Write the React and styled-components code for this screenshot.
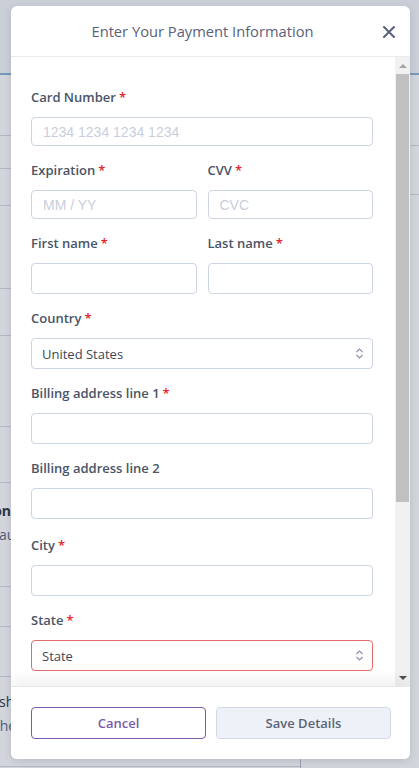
import styled, { createGlobalStyle } from "styled-components";

const GlobalStyle = createGlobalStyle`
  html, body {
    margin: 0;
    padding: 0;
    height: 100%;
  }
  body {
    font-family: "Open Sans", "Liberation Sans", sans-serif;
    background: #ffffff;
    overflow: hidden;
  }
  * {
    box-sizing: border-box;
  }
`;

// page that sits behind the dialog
const Page = styled.div`
  position: relative;
  width: 100%;
  height: 768px;
  background: #ffffff;
  overflow: hidden;
`;
const TopBar = styled.div`
  height: 75px;
  border-bottom: 2px solid #8fb3d9;
  background: #f7f8fa;
`;
const PageBody = styled.div`
  display: flex;
`;
const MainColumn = styled.div`
  width: 301px;
  border-right: 1px solid #b9bfca;
  min-height: 700px;
`;
const SideColumn = styled.div`
  flex: 1;
`;
const PageRow = styled.div`
  height: ${(p) => p.h}px;
  border-bottom: 1px solid #d8dce3;
  padding-top: ${(p) => p.pt || 0}px;
  font-size: 14px;
  line-height: 24px;
  color: #2f3646;
  white-space: nowrap;
`;
const RowTitle = styled.div`
  width: 11px;
  direction: rtl;
  font-weight: ${(p) => (p.bold ? 700 : 400)};
`;
const RowSub = styled.div`
  margin-left: ${(p) => p.shift || 0}px;
  color: ${(p) => p.color || "#5d6b84"};
`;
const Overlay = styled.div`
  position: absolute;
  inset: 0;
  background: rgba(30, 45, 80, 0.2);
`;

// dialog
const Modal = styled.div`
  position: absolute;
  top: 6px;
  left: 11px;
  width: 399px;
  height: 753px;
  background: #ffffff;
  border-radius: 6px;
  box-shadow: 0 2px 8px rgba(0, 0, 0, 0.12);
  display: flex;
  flex-direction: column;
  overflow: hidden;
`;
const Header = styled.div`
  position: relative;
  height: 51px;
  flex-shrink: 0;
  border-bottom: 1px solid #e7eaef;
  display: flex;
  align-items: center;
  justify-content: center;
  padding-right: 16px;
`;
const Title = styled.h2`
  margin: 0;
  font-size: 14.7px;
  font-weight: 400;
  color: #59627a;
`;
const CloseButton = styled.button`
  position: absolute;
  right: 15px;
  top: 19px;
  width: 13px;
  height: 13px;
  padding: 0;
  border: none;
  background: none;
  cursor: pointer;
  display: flex;
  align-items: center;
  justify-content: center;
`;
const BodyWrap = styled.div`
  flex: 1;
  min-height: 0;
  display: flex;
`;
const Body = styled.div`
  flex: 1;
  overflow: hidden;
  padding: 32px 22px 18px 20px;
`;

// drawn scrollbar (the page renders with hidden native scrollbars)
const Scrollbar = styled.div`
  width: 15px;
  flex-shrink: 0;
  background: #f1f1f1;
  display: flex;
  flex-direction: column;
`;
const ScrollArrow = styled.div`
  height: 17px;
  flex-shrink: 0;
  display: flex;
  align-items: center;
  justify-content: center;
  &::before {
    content: "";
    border-left: 4px solid transparent;
    border-right: 4px solid transparent;
    ${(p) =>
      p.$down
        ? "border-top: 4px solid #505050;"
        : "border-bottom: 4px solid #a3a3a3;"}
  }
`;
const ScrollThumb = styled.div`
  height: 428px;
  margin: 0 1px;
  background: #c1c1c1;
`;
const ScrollSpace = styled.div`
  flex: 1;
`;

const Row = styled.div`
  display: grid;
  grid-template-columns: 1fr 1fr;
  column-gap: 11px;
`;
const Field = styled.div`
  margin-bottom: ${(p) => p.$gap || 16}px;
`;
const Label = styled.label`
  display: block;
  font-size: 13px;
  font-weight: 600;
  line-height: 16px;
  color: #4a5468;
  margin-bottom: 12px;
  span {
    color: #e3242b;
    margin-left: 3px;
  }
`;
const Input = styled.input`
  display: block;
  width: 100%;
  height: ${(p) => (p.$stripe ? 29 : 31)}px;
  border: 1px solid #cdd4e2;
  border-radius: 4px;
  padding: 0 11px;
  font-family: ${(p) =>
    p.$stripe ? '"Liberation Sans", Arial, sans-serif' : '"Open Sans", sans-serif'};
  font-size: 14px;
  color: #3b4253;
  background: #ffffff;
  outline: none;
  &::placeholder {
    color: #c8cfdc;
  }
`;
const SelectWrap = styled.div`
  position: relative;
  svg {
    position: absolute;
    right: 9px;
    top: 9px;
    pointer-events: none;
  }
`;
const Select = styled.select`
  display: block;
  width: 100%;
  height: 31px;
  appearance: none;
  border: 1px solid ${(p) => (p.$error ? "#e36b6b" : "#cdd4e2")};
  border-radius: 4px;
  padding: 0 30px 0 10px;
  font-family: "Open Sans", sans-serif;
  font-size: 13px;
  color: #3f4657;
  background: #ffffff;
  outline: none;
`;
const Footer = styled.div`
  flex-shrink: 0;
  height: 73px;
  border-top: 1px solid #e4e7ec;
  box-shadow: 0 -8px 12px rgba(0, 0, 0, 0.05);
  display: grid;
  grid-template-columns: 1fr 1fr;
  column-gap: 10px;
  align-items: center;
  padding: 0 19px 0 20px;
  position: relative;
  background: #ffffff;
`;
const Button = styled.button`
  height: 32px;
  border-radius: 4px;
  font-family: "Open Sans", sans-serif;
  font-size: 13px;
  font-weight: 600;
  cursor: pointer;
  background: ${(p) => (p.$variant === "outline" ? "#ffffff" : "#eef1f7")};
  border: 1px solid ${(p) => (p.$variant === "outline" ? "#7a5aa8" : "#d3d9e6")};
  color: ${(p) => (p.$variant === "outline" ? "#7a5aa8" : "#5a6478")};
`;

const Chevrons = () => (
  <svg width="9" height="13" viewBox="0 0 9 13" fill="none">
    <path d="M1.5 5 L4.5 2 L7.5 5" stroke="#8b93a5" strokeWidth="1.2" />
    <path d="M1.5 8 L4.5 11 L7.5 8" stroke="#8b93a5" strokeWidth="1.2" />
  </svg>
);

const Req = () => <span>*</span>;

const TextField = ({ label, required, gap, ...rest }) => (
  <Field $gap={gap}>
    <Label>
      {label}
      {required && <Req />}
    </Label>
    <Input {...rest} />
  </Field>
);

const SelectField = ({ label, required, value, options, error }) => (
  <Field>
    <Label>
      {label}
      {required && <Req />}
    </Label>
    <SelectWrap>
      <Select defaultValue={value} $error={error}>
        {options.map((o) => (
          <option key={o}>{o}</option>
        ))}
      </Select>
      <Chevrons />
    </SelectWrap>
  </Field>
);

const App = () => {
  return (
    <>
      <GlobalStyle />
      <Page>
        <TopBar />
        <PageBody>
          <MainColumn>
            <PageRow h={61} />
            <PageRow h={33} />
            <PageRow h={37} />
            <PageRow h={83} />
            <PageRow h={47} />
            <PageRow h={91} />
            <PageRow h={56} />
            <PageRow h={104} pt={16}>
              <RowTitle bold>Subscription</RowTitle>
              <RowSub shift={-1}>automatic renewal</RowSub>
            </PageRow>
            <PageRow h={40} />
            <PageRow h={50} />
            <PageRow h={90} pt={13}>
              <RowSub color="#2f3646" shift={-1}>shipping</RowSub>
              <RowSub shift={-7}>checkout</RowSub>
            </PageRow>
          </MainColumn>
          <SideColumn>
            <PageRow h={71} />
            <PageRow h={49} />
          </SideColumn>
        </PageBody>
        <Overlay />
        <Modal>
          <Header>
            <Title>Enter Your Payment Information</Title>
            <CloseButton aria-label="Close">
              <svg width="12" height="12" viewBox="0 0 12 12">
                <path
                  d="M1 1 L11 11 M11 1 L1 11"
                  stroke="#59627a"
                  strokeWidth="2"
                  strokeLinecap="round"
                />
              </svg>
            </CloseButton>
          </Header>
          <BodyWrap>
            <Body>
              <TextField
                label="Card Number"
                required
                $stripe
                placeholder="1234 1234 1234 1234"
              />
              <Row>
                <TextField label="Expiration" required $stripe placeholder="MM / YY" />
                <TextField label="CVV" required $stripe placeholder="CVC" />
              </Row>
              <Row>
                <TextField label="First name" required />
                <TextField label="Last name" required />
              </Row>
              <SelectField
                label="Country"
                required
                value="United States"
                options={["United States", "Canada", "United Kingdom"]}
              />
              <TextField label="Billing address line 1" required />
              <TextField label="Billing address line 2" gap={18} />
              <TextField label="City" required />
              <SelectField
                label="State"
                required
                error
                value="State"
                options={["State", "California", "New York", "Texas"]}
              />
              <TextField label="Zip code" required />
              <TextField label="Phone number" />
            </Body>
            <Scrollbar>
              <ScrollArrow />
              <ScrollThumb />
              <ScrollSpace />
              <ScrollArrow $down />
            </Scrollbar>
          </BodyWrap>
          <Footer>
            <Button $variant="outline">Cancel</Button>
            <Button>Save Details</Button>
          </Footer>
        </Modal>
      </Page>
    </>
  );
};

export default App;
